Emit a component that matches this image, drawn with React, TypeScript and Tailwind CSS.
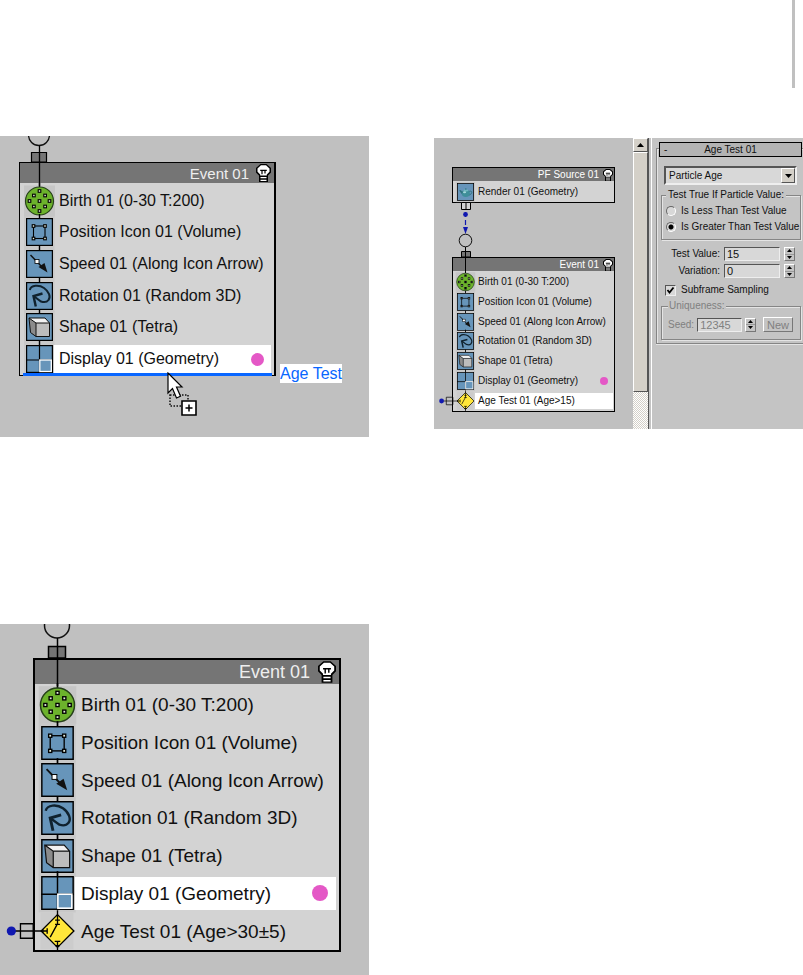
import React from "react";

type Size = "sm" | "md" | "lg";
type IconName = "render" | "birth" | "position" | "speed" | "rotation" | "shape" | "display" | "test";

interface Row {
  icon: IconName;
  label: string;
  selected?: boolean;
  dot?: boolean;
}

const ROWS: Row[] = [
  { icon: "birth", label: "Birth 01 (0-30 T:200)" },
  { icon: "position", label: "Position Icon 01 (Volume)" },
  { icon: "speed", label: "Speed 01 (Along Icon Arrow)" },
  { icon: "rotation", label: "Rotation 01 (Random 3D)" },
  { icon: "shape", label: "Shape 01 (Tetra)" },
];

const STYLES = {
  sm: {
    node: "border",
    header: "h-[13px] gap-1 pr-px text-[10px] text-white",
    bulb: "h-[12px] w-[10px]",
    list: "pt-px",
    row: "pl-1",
    icon: "h-[18px] w-[17px]",
    label: "ml-px mr-px h-[16px] pl-[3px] pr-[5px] text-[10px]",
    dot: "size-2",
  },
  md: {
    node: "border border-r-2",
    header: "h-[20px] gap-[7px] pr-[3px] text-[15px] text-[#eeeeee]",
    bulb: "h-[18px] w-[15px]",
    list: "pt-[2px]",
    row: "pl-[6px]",
    icon: "h-[28px] w-[27px]",
    label: "ml-px mr-[3px] h-[28px] pl-[5px] pr-[7px] text-[16px]",
    dot: "size-[13px]",
  },
  lg: {
    node: "border-2",
    header: "h-[24px] gap-2 pr-[3px] text-[18px] text-[#eeeeee]",
    bulb: "h-[22px] w-[18px]",
    list: "pt-[2px]",
    row: "pl-[6px]",
    icon: "h-[34px] w-[33px]",
    label: "ml-px mr-[3px] h-[33px] pl-[6px] pr-2 text-[19px]",
    dot: "size-4",
  },
};

function Bulb({ className }: { className: string }) {
  return (
    <svg viewBox="0 0 10 12" className={className} aria-hidden="true">
      <path d="M3 0h4l3 2.6v3L8 7.600V12H2V7.600L0 5.600v-3z" fill="#000" />
      <path d="M3.300.9h3.400L9 3v2.200L7.200 7v.7H2.800V7L1 5.200V3z" fill="#fff" />
      <path d="M2.800 4.200h4.400M4 4.200v2.600M6 4.200v2.200" fill="none" stroke="#000" strokeWidth=".8" />
      <path d="M3 9.100h4M3 10.900h4" stroke="#fff" strokeWidth=".8" />
    </svg>
  );
}

function Handle({ x, y }: { x: number; y: number }) {
  return <rect x={x - 1.3} y={y - 1.3} width="2.6" height="2.6" fill="#e4ecdc" stroke="#000" strokeWidth="1.1" />;
}

function Glyph({ name }: { name: IconName }) {
  switch (name) {
    case "render":
      return (
        <>
          <ellipse cx="14" cy="16.5" rx="6.5" ry="5.5" fill="#3f8f9a" />
          <path d="M7.5 17 3.5 11.5l2-.5 4 3z" fill="#2f7480" />
          <path d="M19.5 13c4-1.5 5 1.5 3 4l-3 2" fill="none" stroke="#2f7480" strokeWidth="1.5" />
          <ellipse cx="14" cy="11.5" rx="4" ry="1.6" fill="#6fb8c0" />
          <circle cx="14" cy="9.3" r="1.2" fill="#2f7480" />
          <ellipse cx="12" cy="14.5" rx="2.5" ry="1.5" fill="#a5d8dc" />
        </>
      );
    case "birth":
      return (
        <>
          <rect x="-2" y="-1.5" width="31" height="31" fill="#c6c6c6" />
          <path d="M13.5-4v4" stroke="#000" strokeWidth="1.4" />
          <circle cx="13.5" cy="14" r="14" fill="#6cb22c" stroke="#26401a" strokeWidth="1.2" />
          {[[0, -10], [-5.6, -5.5], [5.6, -5.5], [-10, 0], [0, 0], [10, 0], [-5.6, 5.5], [5.6, 5.5], [0, 10]].map(
            ([x, y]) => (
              <Handle key={x + "," + y} x={13.5 + x} y={14 + y} />
            ),
          )}
        </>
      );
    case "position":
      return (
        <>
          <rect x="7.5" y="8" width="11.500" height="12.5" fill="none" stroke="#000" strokeWidth="1.1" />
          <Handle x={7.5} y={8} />
          <Handle x={19} y={8} />
          <Handle x={7.5} y={20.5} />
          <Handle x={19} y={20.5} />
        </>
      );
    case "speed":
      return (
        <>
          <path d="m4.500 5 12 12.5" stroke="#111" strokeWidth="1.5" />
          <path d="m12.5 17 6-4 3 9.500z" fill="#111" />
          <rect x="9" y="9.5" width="4" height="4" fill="#fff" stroke="#000" strokeWidth=".8" />
        </>
      );
    case "rotation":
      return (
        <>
          <path
            d="M3.800 8C5 3 13 2.500 18 6c5 3.500 7 9 4.500 12-1.500 2-4.500 2.500-7.500 1.500L7.500 14"
            fill="none"
            stroke="#10222e"
            strokeWidth="2"
          />
          <path d="m16.500 11.500-9 2.500 2.300 10.500" fill="none" stroke="#10222e" strokeWidth="2.400" />
        </>
      );
    case "shape":
      return (
        <>
          <path d="M3 5h16l4.500 5H10z" fill="#f2f2f2" />
          <path d="m3 5 7 5v13.500L4.500 19.500z" fill="#8b8b8b" />
          <path d="M10 10h13.500v13.500H10z" fill="#bdbdbd" />
          <path d="M3 5h16l4.500 5v13.500H10L4.500 19.500zM3 5l7 5h13.500M10 10v13.500" fill="none" stroke="#111" />
        </>
      );
    case "display":
      return (
        <>
          <path d="M13.5 0v28M0 15h27" stroke="#000" strokeWidth="1.2" />
          <rect x="13.8" y="15" width="11.5" height="11.5" fill="#6795ba" stroke="#fff" strokeWidth="1.3" />
        </>
      );
    case "test":
      return (
        <>
          <rect x="-.5" y="-1" width="27" height="30" fill="#cccccc" />
          <path d="M13.5.5 27 14 13.5 27.5 0 14z" fill="#ffe63a" stroke="#000" strokeWidth="1.1" />
          <path
            d="M13.5-3v11.500M11.500 5h4M11.500 8.500h4M13.5 31v-8.500M11.200 22.500h4.600M11.500 26h4M13 9 7.500 19"
            stroke="#000"
            strokeWidth="1.1"
            fill="none"
          />
          <path d="M-24.5 14H5M5 11.800v4.400M1.500 12.500v3M-17 8h10.500v12H-17z" stroke="#000" strokeWidth="1.1" fill="none" />
          <circle cx="-24.5" cy="14" r="3.8" fill="#1018b0" />
        </>
      );
  }
}

function OperatorIcon({ name, className }: { name: IconName; className: string }) {
  const tile = name !== "birth" && name !== "test";
  return (
    <svg viewBox="0 0 27 28" className={`relative shrink-0 overflow-visible ${className}`} aria-hidden="true">
      {tile && (
        <>
          <rect x="-2" y="-2" width="30.5" height="32" fill="#c8c8c8" />
          {name !== "render" && <path d="M13.5-4v4" stroke="#000" strokeWidth="1.4" />}
          <rect x=".6" y=".6" width="25.8" height="26.8" fill="#6795ba" stroke="#000" strokeWidth="1.2" />
        </>
      )}
      <Glyph name={name} />
    </svg>
  );
}

function EventNode({ title, rows, size, listClass }: { title: string; rows: Row[]; size: Size; listClass: string }) {
  const s = STYLES[size];
  return (
    <section className={`border-black bg-[#d3d3d3] ${s.node}`}>
      <h2 className={`flex items-center justify-end bg-[#757575] font-normal leading-none ${s.header}`}>
        {title}
        <Bulb className={s.bulb} />
      </h2>
      <div className={s.list}>
        <ul className={`grid auto-rows-fr ${listClass}`}>
          {rows.map((row) => (
            <li key={row.label} className={`flex min-h-0 items-center ${s.row}`}>
              <OperatorIcon name={row.icon} className={s.icon} />
              <span
                className={`relative flex min-w-0 flex-1 items-center justify-between whitespace-nowrap leading-none ${s.label} ${
                  row.selected ? "bg-white" : ""
                }`}
              >
                {row.label}
                {row.dot && <i className={`rounded-full bg-[#e458c6] ${s.dot}`} />}
              </span>
            </li>
          ))}
        </ul>
      </div>
    </section>
  );
}

function DropCursor() {
  return (
    <svg viewBox="0 0 32 46" className="absolute left-[167px] top-[236px] h-[46px] w-[32px]" aria-hidden="true">
      <path d="M3 23h18v11H3z" fill="none" stroke="#111" strokeWidth="1.5" strokeDasharray="1.5 1.5" />
      <path d="M1 1v20l4.500-4.500L9.500 26l4-1.800L9.500 15H15z" fill="#fff" stroke="#000" strokeWidth="1.2" />
      <path d="M15 29h14v14H15z" fill="#fff" stroke="#000" strokeWidth="1.6" />
      <path d="M18.5 36h7M22 32.500v7" stroke="#000" strokeWidth="1.5" />
    </svg>
  );
}

function DragFigure() {
  return (
    <figure className="relative overflow-hidden bg-[#c0c0c0] pb-[61px] pl-[19px]">
      <svg viewBox="0 0 40 26" className="relative z-10 block h-[26px] w-[40px] overflow-visible" aria-hidden="true">
        <circle cx="20" cy="-1" r="10.5" fill="none" stroke="#111" strokeWidth="1.3" />
        <path d="M12.5 16.5h15V26h-15z" fill="#757575" stroke="#000" strokeWidth="1.2" />
        <path d="M20.5 9.5V50" stroke="#000" strokeWidth="1.3" />
      </svg>
      <div className="relative mr-[93px]">
        <EventNode
          title="Event 01"
          size="md"
          listClass="h-[190px]"
          rows={[...ROWS, { icon: "display", label: "Display 01 (Geometry)", selected: true, dot: true }]}
        />
        <div className="absolute bottom-0 left-1 right-1 h-[3px] bg-[#0866ff]" />
        <span className="absolute -bottom-[7px] left-full ml-[4px] whitespace-nowrap bg-white text-[16px] leading-[19px] text-[#0866ff]">
          Age Test
        </span>
      </div>
      <DropCursor />
    </figure>
  );
}

function ResultFigure() {
  return (
    <figure className="overflow-hidden bg-[#c0c0c0] pb-[23px] pl-[33px] pr-[28px]">
      <svg viewBox="0 0 48 34" className="relative z-10 block h-[34px] w-[48px] overflow-visible" aria-hidden="true">
        <circle cx="24" cy="1.5" r="12.5" fill="none" stroke="#111" strokeWidth="1.5" />
        <path d="M15.5 22.5h17V34h-17z" fill="#757575" stroke="#000" strokeWidth="1.5" />
        <path d="M24.5 14v48" stroke="#000" strokeWidth="1.5" />
      </svg>
      <EventNode
        title="Event 01"
        size="lg"
        listClass="h-[264px]"
        rows={[
          ...ROWS,
          { icon: "display", label: "Display 01 (Geometry)", selected: true, dot: true },
          { icon: "test", label: "Age Test 01 (Age>30±5)" },
        ]}
      />
    </figure>
  );
}

function Scrollbar() {
  const raised = "border border-t-white border-l-white border-b-[#555555] border-r-[#555555] bg-[#d4d0c8]";
  return (
    <div className="flex w-[15px] shrink-0 flex-col bg-[repeating-conic-gradient(#d4d0c8_0_25%,#ffffff_0_50%)] bg-[length:2px_2px]">
      <button aria-label="Scroll up" className={`flex h-[14px] items-center justify-center ${raised}`}>
        <svg viewBox="0 0 7 4" className="h-1 w-[7px]">
          <path d="M0 4 3.5 0 7 4z" />
        </svg>
      </button>
      <div className={`h-[240px] ${raised}`} />
    </div>
  );
}

const ETCHED = "border border-[#858585] shadow-[1px_1px_0_#e4e4e4,inset_1px_1px_0_#e4e4e4]";
const SUNKEN = "rounded-none border border-b-[#eeeeee] border-l-[#555555] border-r-[#eeeeee] border-t-[#555555] bg-[#d8d8d8]";

function Spinner({ label }: { label: string }) {
  return (
    <span className="flex h-[14px] w-[11px] shrink-0 flex-col border border-b-[#777777] border-l-white border-r-[#777777] border-t-white">
      <button type="button" aria-label={`${label} up`} className="flex flex-1 items-center justify-center border-b border-[#999999]">
        <svg viewBox="0 0 5 3" className="h-[3px] w-[5px]">
          <path d="M0 3 2.5 0 5 3z" />
        </svg>
      </button>
      <button type="button" aria-label={`${label} down`} className="flex flex-1 items-center justify-center">
        <svg viewBox="0 0 5 3" className="h-[3px] w-[5px]">
          <path d="m0 0 2.5 3L5 0z" />
        </svg>
      </button>
    </span>
  );
}

function NumberField({ id, label, value }: { id: string; label: string; value: string }) {
  return (
    <div className="flex items-center gap-1">
      <label htmlFor={id} className="w-[61px] text-right">
        {label}
      </label>
      <input id={id} defaultValue={value} className={`h-[14px] w-0 min-w-0 flex-1 pl-[2px] text-[11px] ${SUNKEN}`} />
      <Spinner label={label} />
    </div>
  );
}

function Radio({ id, label, checked }: { id: string; label: string; checked?: boolean }) {
  return (
    <div className="flex h-4 items-center gap-[5px]">
      <input
        id={id}
        type="radio"
        name="comparison"
        defaultChecked={checked}
        className="size-[10px] shrink-0 appearance-none rounded-full border border-b-white border-l-[#666666] border-r-white border-t-[#666666] bg-[#d8d8d8] checked:bg-[radial-gradient(circle,#000_0_2px,#d8d8d8_3px)]"
      />
      <label htmlFor={id}>{label}</label>
    </div>
  );
}

function Parameters() {
  return (
    <form className="min-w-0 flex-1 overflow-hidden whitespace-nowrap border-l border-white bg-[#c4c4c4] pl-1 pt-1 text-[10px] leading-[12px]">
      <div className="relative mt-[6px] h-[196px] border-y border-l border-[#858585] pl-[2px] shadow-[inset_1px_1px_0_#e4e4e4,0_1px_0_#e4e4e4]">
        <button
          type="button"
          className="relative -mt-[7px] block h-[15px] w-[calc(100%-1px)] border border-black bg-[#b3b3b3] text-center leading-[13px]"
        >
          <span className="absolute left-1">-</span>
          Age Test 01
        </button>
        <div className="relative ml-[5px] mr-[6px] mt-[9px]">
          <select
            aria-label="Test type"
            className={`block h-[19px] w-full appearance-none border-2 pl-[3px] text-[10px] ${SUNKEN}`}
          >
            <option>Particle Age</option>
          </select>
          <span className="pointer-events-none absolute bottom-[2px] right-[2px] top-[2px] flex w-[14px] items-center justify-center border border-b-[#555555] border-l-white border-r-[#555555] border-t-white bg-[#d4d0c8]">
            <svg viewBox="0 0 7 4" className="h-1 w-[7px]">
              <path d="M0 0h7L3.5 4z" />
            </svg>
          </span>
        </div>
        <fieldset className={`ml-[2px] mr-[2px] mt-1 pb-1 pl-[4px] ${ETCHED}`}>
          <legend className="bg-[#c4c4c4] px-[2px]">Test True If Particle Value:</legend>
          <div className="pt-[2px]">
            <Radio id="less" label="Is Less Than Test Value" />
            <Radio id="greater" label="Is Greater Than Test Value" checked />
          </div>
        </fieldset>
        <div className="mr-2 mt-[7px] flex flex-col gap-[3px]">
          <NumberField id="value" label="Test Value:" value="15" />
          <NumberField id="variation" label="Variation:" value="0" />
        </div>
        <div className="ml-[6px] mt-[6px] flex items-center gap-[5px]">
          <span className="relative flex size-[11px]">
            <input
              id="subframe"
              type="checkbox"
              defaultChecked
              className={`peer size-[11px] appearance-none ${SUNKEN}`}
            />
            <svg viewBox="0 0 11 11" className="pointer-events-none invisible absolute inset-0 peer-checked:visible">
              <path d="m2.5 5 2 2.500 4-5" fill="none" stroke="#000" strokeWidth="1.8" />
            </svg>
          </span>
          <label htmlFor="subframe">Subframe Sampling</label>
        </div>
        <fieldset disabled className={`ml-[2px] mr-[2px] mt-[4px] pb-[7px] pl-[6px] text-[#808080] ${ETCHED}`}>
          <legend className="bg-[#c4c4c4] px-px">Uniqueness:</legend>
          <div className="flex items-center gap-[3px] pr-[7px] pt-[5px]">
            <label htmlFor="seed">Seed:</label>
            <input
              id="seed"
              defaultValue="12345"
              className={`h-[14px] w-[45px] pl-[2px] text-[11px] text-[#808080] ${SUNKEN}`}
            />
            <Spinner label="Seed" />
            <button
              type="button"
              className="ml-auto h-[15px] w-[30px] border border-b-[#777777] border-l-white border-r-[#777777] border-t-white text-[11px]"
            >
              New
            </button>
          </div>
        </fieldset>
      </div>
    </form>
  );
}

function EditorFigure() {
  return (
    <figure className="mt-[2px] flex h-[291px] overflow-hidden">
      <div className="w-[199px] shrink-0 bg-[#c0c0c0] pl-[18px] pr-[18px] pt-[29px]">
        <EventNode title="PF Source 01" size="sm" listClass="h-[20px]" rows={[{ icon: "render", label: "Render 01 (Geometry)" }]} />
        <svg viewBox="0 0 28 54" className="relative z-10 block h-[54px] w-[28px] overflow-visible" aria-hidden="true">
          <path d="M9.5-.5h9v7h-9zM14 0v6" fill="#d3d3d3" stroke="#000" />
          <path d="M13.5 9v18" stroke="#1018b0" strokeWidth="1.2" strokeDasharray="5 3" />
          <circle cx="13.5" cy="11.5" r="2.4" fill="#1018b0" />
          <path d="M11 24h5l-2.500 7z" fill="#1018b0" />
          <circle cx="13.5" cy="37.5" r="6.3" fill="none" stroke="#111" />
          <path d="M9.5 48.5h9V54h-9z" fill="#757575" stroke="#000" />
          <path d="M13.5 44v26" stroke="#000" />
        </svg>
        <EventNode
          title="Event 01"
          size="sm"
          listClass="h-[139px]"
          rows={[
            ...ROWS,
            { icon: "display", label: "Display 01 (Geometry)", dot: true },
            { icon: "test", label: "Age Test 01 (Age>15)", selected: true },
          ]}
        />
      </div>
      <Scrollbar />
      <div className="w-[3px] shrink-0 border-l border-[#555555] bg-[#c4c4c4]" />
      <Parameters />
    </figure>
  );
}

export default function App() {
  return (
    <main className="bg-white font-['Liberation_Sans',Arial,sans-serif] text-[#111111]">
      <header className="flex h-[136px] justify-end pr-[8px]">
        <div className="h-[88px] w-[3px] bg-[#c0c0c0]" />
      </header>
      <div className="grid grid-cols-2 items-start gap-x-[65px] gap-y-[187px]">
        <DragFigure />
        <EditorFigure />
        <ResultFigure />
      </div>
    </main>
  );
}
